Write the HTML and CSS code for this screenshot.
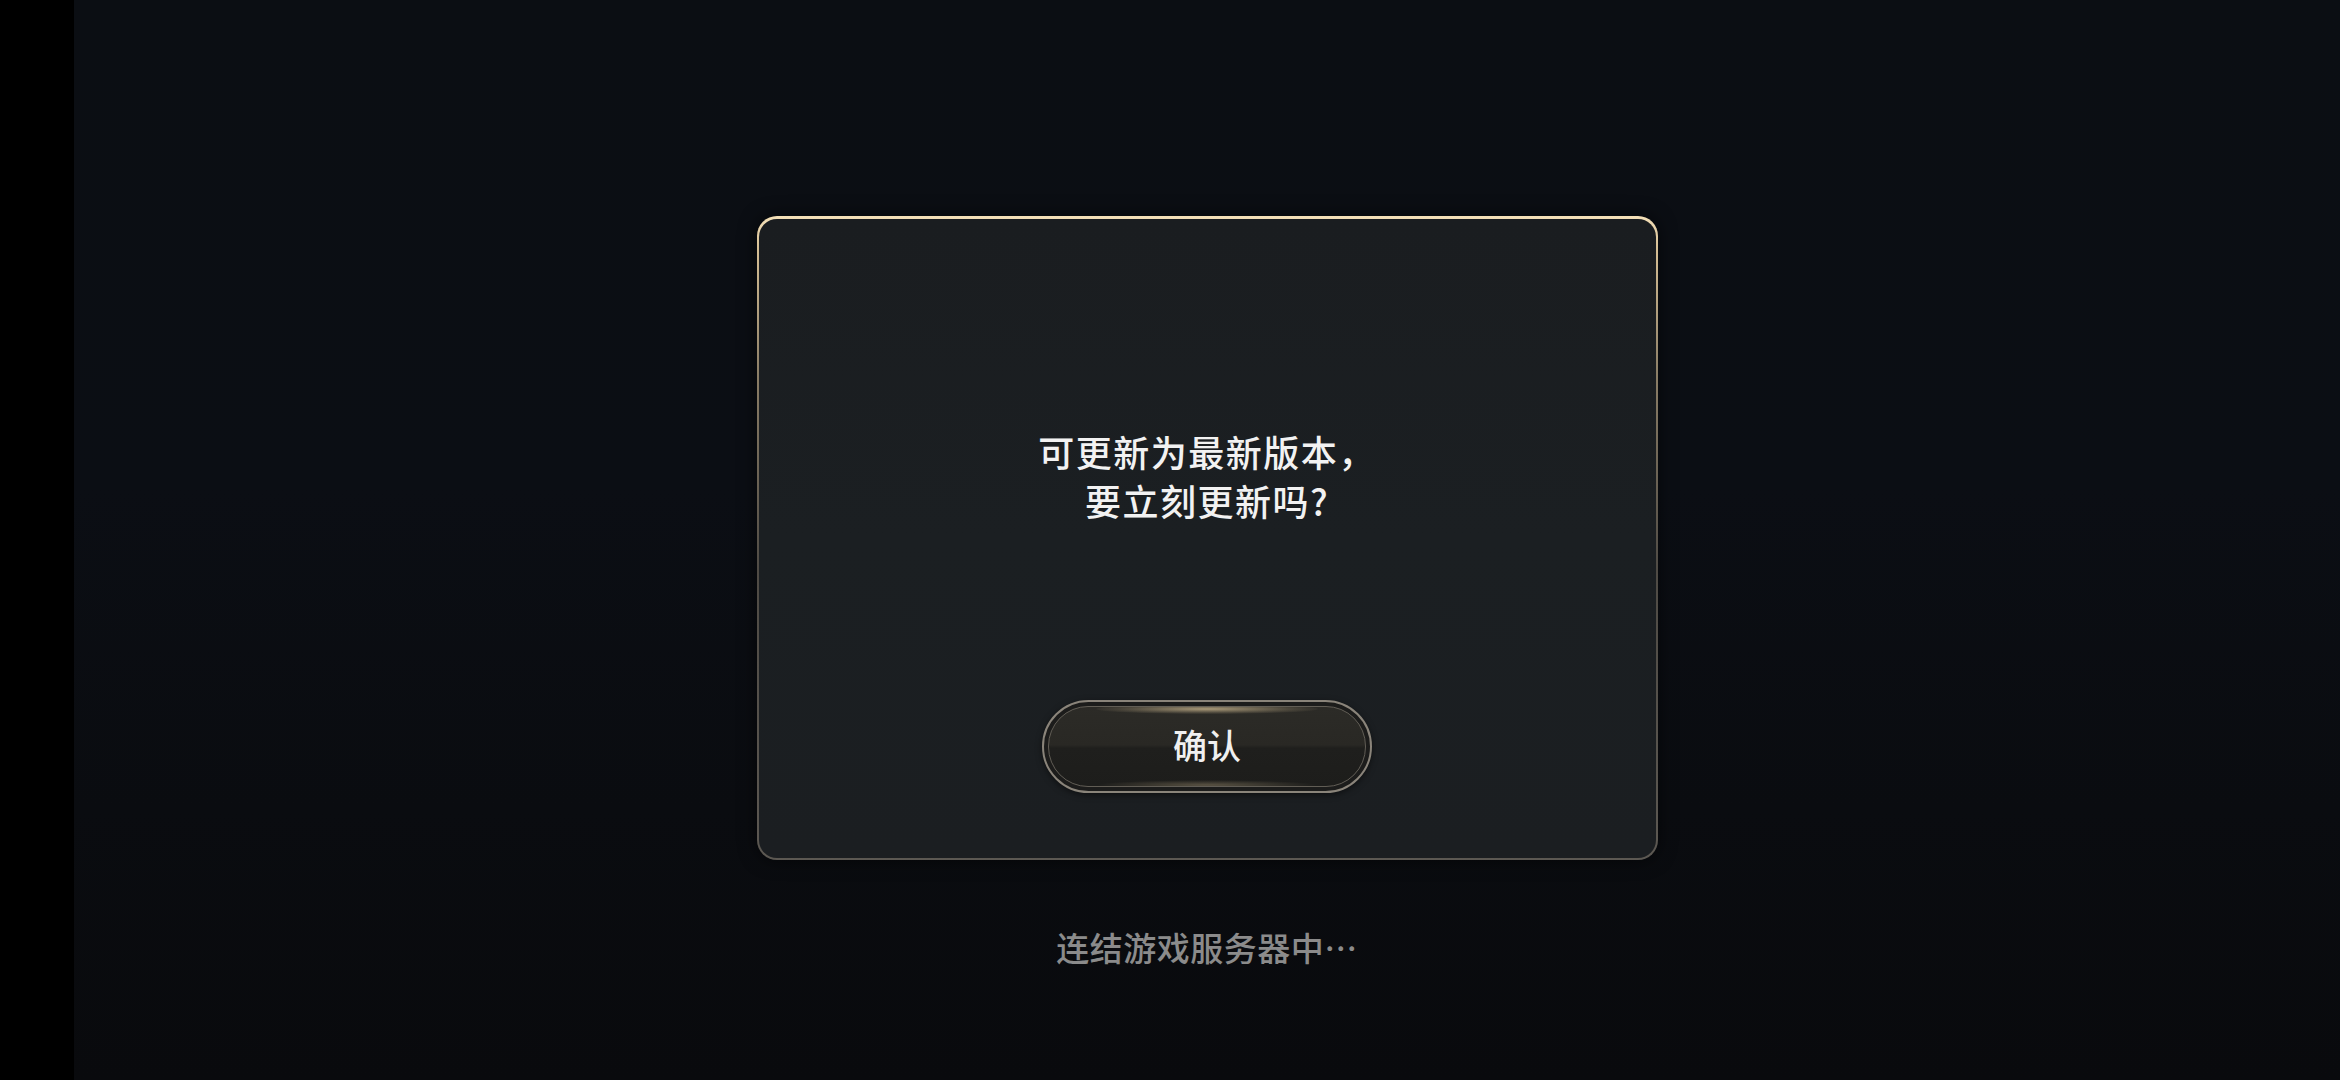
FILE: index.html
```html
<!DOCTYPE html>
<html lang="zh-CN">
<head>
  <meta charset="UTF-8">
  <title>更新</title>
  <link rel="stylesheet" href="styles.css">
</head>
<body>

  <div class="edge"></div>

  <div class="stage">
    <div class="dialog-frame">
      <div class="dialog">
        <div class="message">可更新为最新版本，<br>要立刻更新吗?</div>
        <button class="confirm">
          <span class="confirm-inner">确认</span>
        </button>
      </div>
    </div>

    <div class="status">连结游戏服务器中…</div>
  </div>

</body>
</html>
```

FILE: styles.css
```css
html, body {
  height: 100%;
}

body {
  margin: 0;
  display: flex;
  font-family: "Noto Sans CJK SC", "Noto Sans", sans-serif;
  background: #000;
  overflow: hidden;
}

.edge {
  width: 74px;
  flex-shrink: 0;
  background: #000;
}

.stage {
  flex: 1;
  display: flex;
  flex-direction: column;
  align-items: center;
  padding-top: 216px;
  background: linear-gradient(180deg, #0b0e13 0%, #0b0e14 45%, #0a0c10 75%, #090a0d 100%);
}

.dialog-frame {
  width: 901px;
  height: 644px;
  box-sizing: border-box;
  padding: 3px 2px 2px;
  border-radius: 20px;
  background: linear-gradient(180deg, #f4e0b8 0%, #d6bf95 5%, #8a7d66 25%, #4f4b45 55%, #5c5852 100%);
  box-shadow: 0 0 18px rgba(0, 0, 0, 0.6);
}

.dialog {
  height: 100%;
  box-sizing: border-box;
  border-radius: 18px;
  background: linear-gradient(180deg, #1a1d20 0%, #1b1f22 50%, #1b1e21 100%);
  display: flex;
  flex-direction: column;
  align-items: center;
  padding-top: 208px;
}

.message {
  color: #f2f2f2;
  font-size: 36px;
  font-weight: 500;
  line-height: 49px;
  text-align: center;
  letter-spacing: 1.5px;
}

.confirm {
  margin-top: 175px;
  width: 330px;
  height: 93px;
  padding: 4px;
  box-sizing: border-box;
  border-radius: 47px;
  border: 2px solid #8a847a;
  background: #1c1c1b;
  box-shadow: 0 2px 6px rgba(0, 0, 0, 0.5);
  cursor: pointer;
  font-family: inherit;
}

.confirm-inner {
  position: relative;
  display: flex;
  align-items: center;
  justify-content: center;
  height: 100%;
  border-radius: 40px;
  border: 1px solid #615d55;
  background: linear-gradient(180deg, #2c2b27 0%, #292824 48%, #1f1f1d 52%, #1d1d1b 100%);
  color: #f0f0f0;
  font-size: 34px;
  font-weight: 500;
  padding-bottom: 4px;
  box-sizing: border-box;
  overflow: hidden;
}

.confirm-inner::before,
.confirm-inner::after {
  content: "";
  position: absolute;
  left: 15%;
  right: 15%;
  height: 10px;
  border-radius: 50%;
}

.confirm-inner::before {
  top: -3px;
  background: radial-gradient(ellipse at center, rgba(236, 212, 164, 0.65) 0%, rgba(200, 180, 140, 0.18) 55%, rgba(0, 0, 0, 0) 75%);
}

.confirm-inner::after {
  bottom: -4px;
  background: radial-gradient(ellipse at center, rgba(200, 180, 140, 0.35) 0%, rgba(0, 0, 0, 0) 70%);
}

.status {
  margin-top: 65px;
  color: #8b8b8b;
  font-size: 33px;
  font-weight: 500;
  line-height: 45px;
  letter-spacing: 0.5px;
}
```
